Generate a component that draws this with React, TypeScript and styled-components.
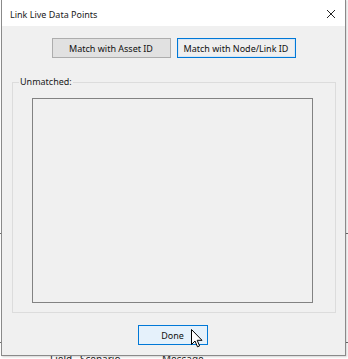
import React from "react";
import styled, { createGlobalStyle } from "styled-components";

const Global = createGlobalStyle`
  html, body { margin: 0; padding: 0; background: #ffffff; }
  body { font-family: "Noto Sans", "Segoe UI", "Liberation Sans", sans-serif; }
`;

const Desktop = styled.div`
  position: relative;
  width: 348px;
  height: 359px;
  overflow: hidden;
  background: #ffffff;
`;

const Backdrop = styled.div`
  display: flex;
  flex-direction: column;
  padding-top: 233px;
`;

const Rule = styled.div<{ $gap: number }>`
  height: 1px;
  background: #6e6e6e;
  margin-bottom: ${(p) => p.$gap}px;
`;

const HeaderRow = styled.div`
  display: flex;
  padding-left: 50px;
  font-size: 10px;
  line-height: 12px;
  color: #222;
`;

const HeaderCell = styled.span<{ $w: number }>`
  width: ${(p) => p.$w}px;
`;

const Window = styled.div`
  position: absolute;
  left: 1px;
  top: -1px;
  width: 343px;
  height: 355px;
  border: 1px solid #8a8a8a;
  background: #f0f0f0;
  box-shadow: 1px 1px 2px rgba(0, 0, 0, 0.18);
  display: flex;
  flex-direction: column;
`;

const TitleBar = styled.div`
  flex-shrink: 0;
  height: 26px;
  background: #ffffff;
  display: flex;
  align-items: center;
  justify-content: space-between;
  padding: 2px 9px 0 8px;
  box-sizing: border-box;
`;

const Title = styled.span`
  font-size: 9px;
  color: #1a1a1a;
`;

const Body = styled.div`
  flex: 1;
  display: flex;
  flex-direction: column;
  padding: 12px 8px 10px 10px;
`;

const ButtonRow = styled.div`
  display: flex;
  justify-content: center;
  gap: 6px;
  padding-right: 2px;
`;

const PushButton = styled.button<{ $state?: "normal" | "focus" | "hover" }>`
  box-sizing: border-box;
  flex-shrink: 0;
  height: 20px;
  width: ${(p) => (p.$state === "hover" ? 70 : 119)}px;
  padding: 0;
  font-family: inherit;
  font-size: 9px;
  color: #111;
  background: ${(p) =>
    p.$state === "hover" ? "#e5f1fb" : p.$state === "focus" ? "#efefef" : "#e1e1e1"};
  border: 1px solid
    ${(p) => (p.$state === "normal" ? "#adadad" : "#0078d7")};
  ${(p) => (p.$state === "focus" ? "box-shadow: inset 0 0 0 1px #d6e6f5;" : "")}
`;

const GroupBox = styled.div`
  position: relative;
  box-sizing: border-box;
  flex-shrink: 0;
  margin-top: 24px;
  margin-right: 1px;
  height: 231px;
  border: 1px solid #dcdcdc;
  padding: 15px 22px 9px 19px;
`;

const GroupLabel = styled.span`
  position: absolute;
  top: -7px;
  left: 6px;
  padding: 0 1px;
  background: #f0f0f0;
  font-size: 9px;
  line-height: 12px;
  color: #1a1a1a;
`;

const ListBox = styled.div`
  height: 100%;
  box-sizing: border-box;
  border: 1px solid #828282;
  background: #f0f0f0;
`;

const Footer = styled.div`
  display: flex;
  justify-content: center;
  margin-top: 12px;
  padding-right: 4px;
`;

const Cursor = styled.svg`
  position: absolute;
  left: 191px;
  top: 329px;
`;

export default function App() {
  return (
    <>
      <Global />
      <Desktop>
        <Backdrop>
          <Rule $gap={108} />
          <Rule $gap={10} />
          <HeaderRow>
            <HeaderCell $w={30}>Field</HeaderCell>
            <HeaderCell $w={82}>Scenario</HeaderCell>
            <HeaderCell $w={60}>Message</HeaderCell>
          </HeaderRow>
        </Backdrop>
        <Window>
          <TitleBar>
            <Title>Link Live Data Points</Title>
            <svg width="10" height="10" viewBox="0 0 10 10">
              <path d="M1 1 L9 9 M9 1 L1 9" stroke="#222" strokeWidth="1" />
            </svg>
          </TitleBar>
          <Body>
            <ButtonRow>
              <PushButton $state="normal">Match with Asset ID</PushButton>
              <PushButton $state="focus">Match with Node/Link ID</PushButton>
            </ButtonRow>
            <GroupBox>
              <GroupLabel>Unmatched:</GroupLabel>
              <ListBox />
            </GroupBox>
            <Footer>
              <PushButton $state="hover">Done</PushButton>
            </Footer>
          </Body>
        </Window>
        <Cursor width="12" height="19" viewBox="0 0 12 19">
          <path
            d="M0.5 0.5 L0.5 15.5 L4 12 L6.5 17.8 L8.6 16.9 L6.2 11.3 L11 11.3 Z"
            fill="#ffffff"
            stroke="#000000"
            strokeWidth="1"
            strokeLinejoin="miter"
          />
        </Cursor>
      </Desktop>
    </>
  );
}
